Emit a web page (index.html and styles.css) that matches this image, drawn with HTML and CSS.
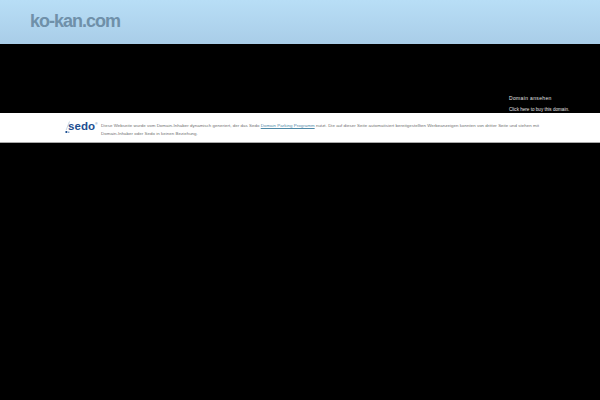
FILE: index.html
```html
<!DOCTYPE html>
<html lang="de">
<head>
<meta charset="utf-8">
<title>ko-kan.com</title>
<link rel="stylesheet" href="styles.css">
</head>
<body>
<header class="top"><h1 class="domain">ko-kan.com</h1></header>
<section class="dark">
  <div class="sale">
    <a class="sale-link sale-view" href="#">Domain ansehen</a>
    <a class="sale-link sale-buy" href="#">Click here to buy this domain.</a>
  </div>
</section>
<section class="notice">
  <div class="logo">
    <svg class="swoosh" width="5" height="16" viewBox="0 0 5 16"><path d="M4.5 1.5 1.2 10" stroke="#a9c3d8" stroke-width=".7" fill="none"/><rect x=".5" y="11" width="1.8" height="2" fill="#1d4f91"/><rect x="3" y="11.5" width="1.4" height="1.5" fill="#8aa9cf"/></svg>
    <span class="logo-word">sedo</span><span class="logo-mark">®</span>
  </div>
  <div class="notice-text">
    <p class="notice-line">Diese Webseite wurde vom Domain-Inhaber dynamisch generiert, der das Sedo <a class="notice-link" href="#">Domain Parking Programm</a> nutzt. Die auf dieser Seite automatisiert bereitgestellten Werbeanzeigen konnten von dritter Seite und stehen mit</p>
    <p class="notice-line">Domain-Inhaber oder Sedo in keinen Beziehung.</p>
  </div>
</section>
</body>
</html>
```
FILE: styles.css
```css
html, body { margin: 0; height: 100%; background: #000; }
body { font-family: "Liberation Sans", Arial, sans-serif; overflow: hidden; }
.top {
  height: 44px;
  box-sizing: border-box;
  padding: 10px 0 0 30px;
  background: linear-gradient(#b8def6, #a9cde8);
}
.domain {
  margin: 0;
  font-size: 18px;
  line-height: 22px;
  font-weight: 700;
  letter-spacing: -1px;
  color: #6f90a9;
}
.dark {
  height: 69px;
  box-sizing: border-box;
  padding: 52px 31px 0 0;
  display: flex;
  justify-content: flex-end;
}
.sale { width: 60px; display: flex; flex-direction: column; gap: 6px; }
.sale-link {
  color: #e4e4e4;
  line-height: 5px;
  white-space: nowrap;
  text-decoration: none;
}
.sale-view { font-size: 5px; letter-spacing: 0.35px; }
.sale-buy { font-size: 4.6px; }
.notice {
  height: 30px;
  box-sizing: border-box;
  background: #fff;
  border-bottom: 1px solid #aaa;
  padding: 7px 0 0 65px;
  display: flex;
  align-items: flex-start;
}
.logo { width: 36px; flex: none; display: flex; align-items: flex-start; color: #1d4f91; }
.swoosh { flex: none; }
.logo-word { font-size: 11.5px; line-height: 13px; font-weight: 700; letter-spacing: 0.1px; margin-left: -2px; }
.logo-mark { font-size: 3px; line-height: 8px; }
.notice-text { margin-top: 2px; color: #707070; font-size: 4.4px; letter-spacing: 0.042px; }
.notice-line { margin: 0; line-height: 7.5px; white-space: nowrap; }
.notice-link { color: #4f8aa8; }
```
